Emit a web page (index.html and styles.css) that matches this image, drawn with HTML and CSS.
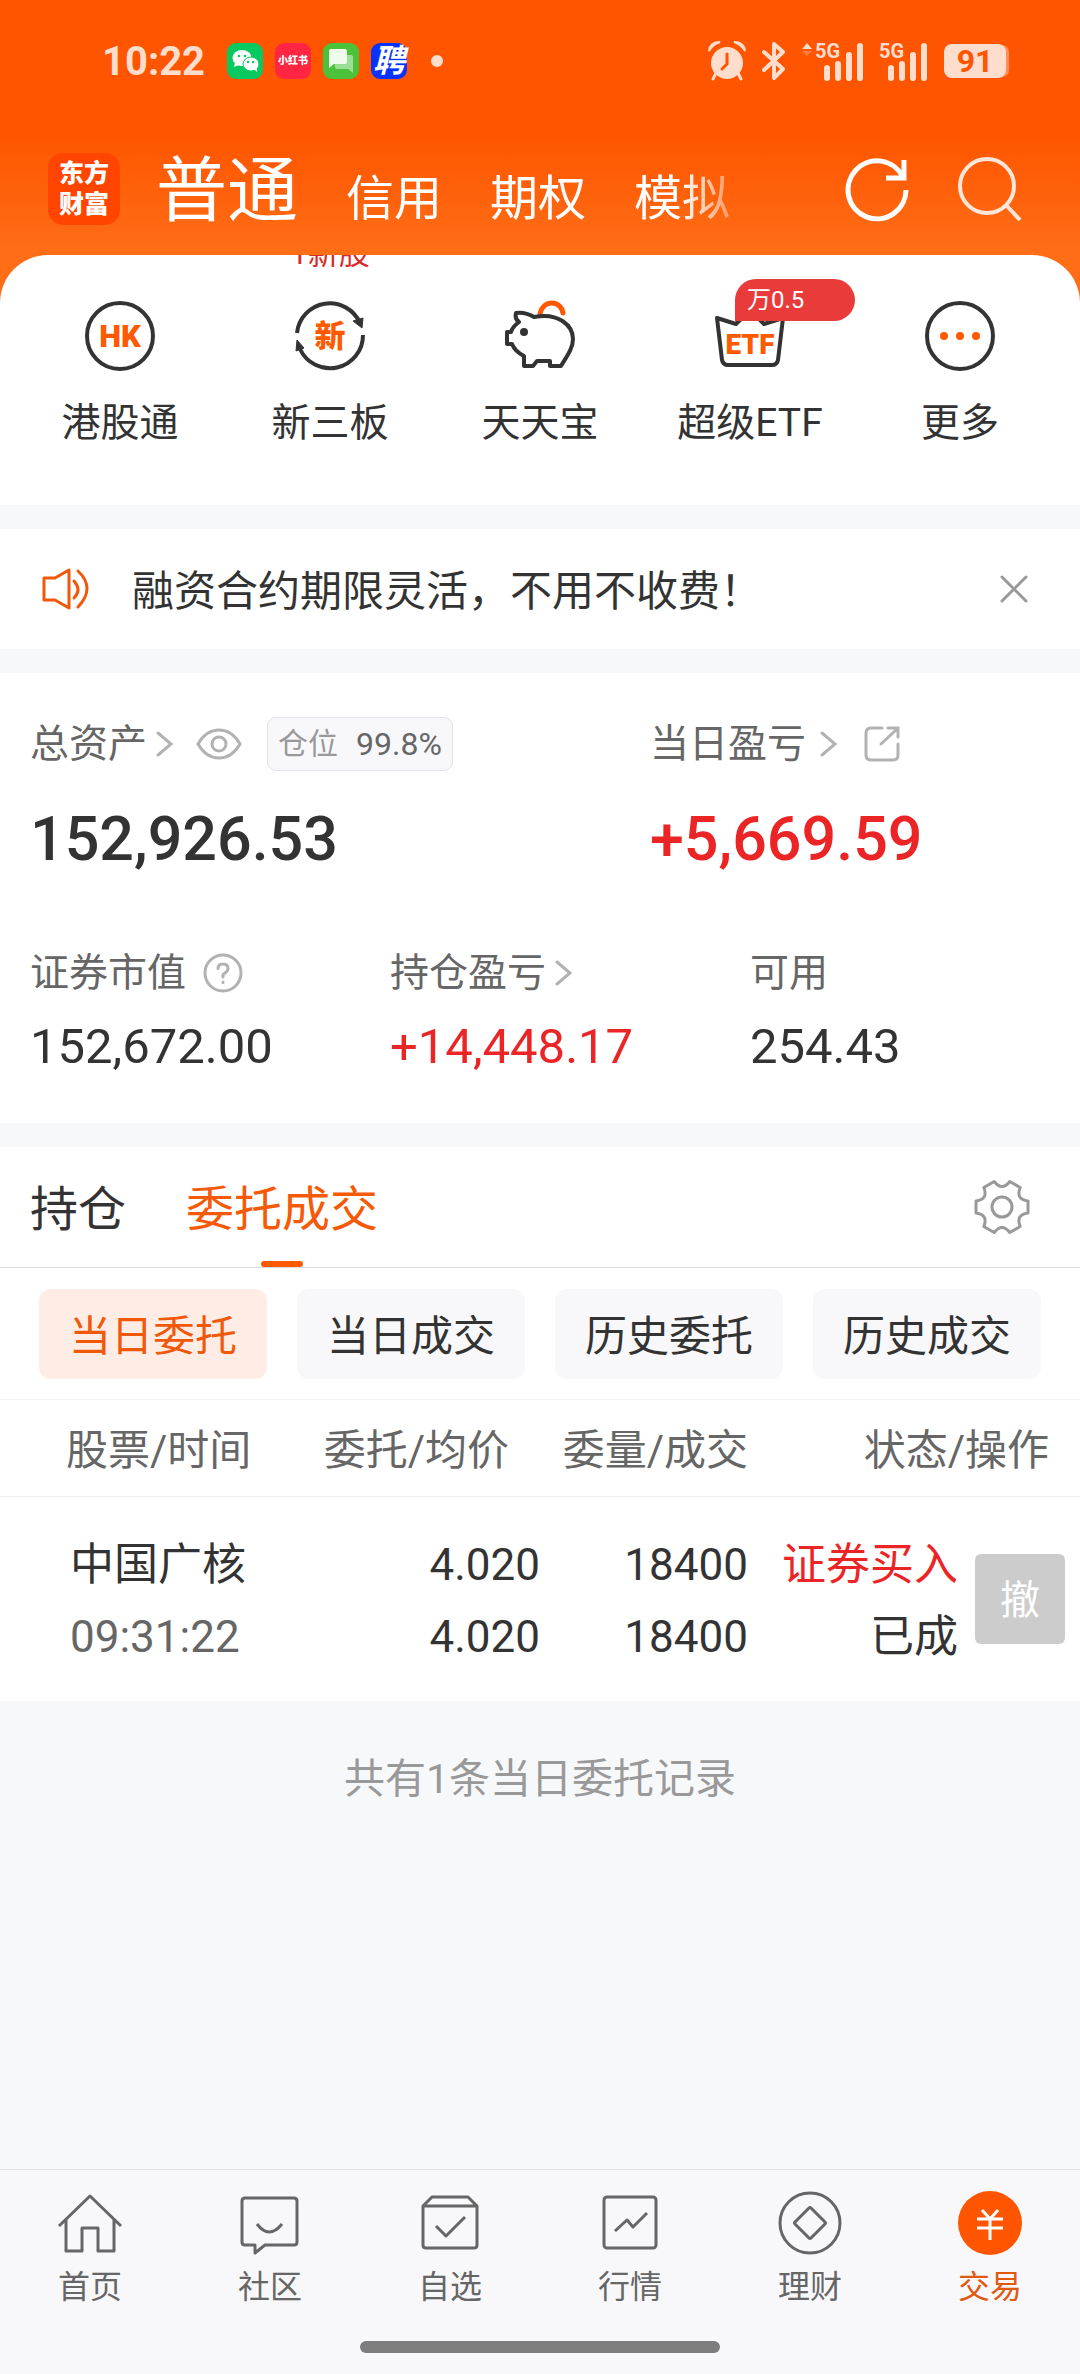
FILE: index.html
```html
<!DOCTYPE html>
<html lang="zh-CN">
<head>
<meta charset="utf-8">
<meta name="viewport" content="width=device-width, initial-scale=1">
<title>交易</title>
<link rel="stylesheet" href="styles.css">
</head>
<body>
<div class="hero">
  <div class="status">
    <span class="clock">10:22</span>
    <span class="notes">
      <svg class="app" viewBox="0 0 36 36" aria-hidden="true"><rect width="36" height="36" rx="9" fill="#07c960"/><ellipse cx="15" cy="15" rx="9.500" ry="8" fill="#fff"/><path d="M8 20l-1 4 5-2z" fill="#fff"/><ellipse cx="24" cy="21" rx="8" ry="7" fill="#fff" stroke="#07c960"/><path d="M27 26l3 3v-4z" fill="#fff"/><g fill="#07c960"><circle cx="12" cy="13" r="1.300"/><circle cx="18" cy="13" r="1.300"/><circle cx="21" cy="19" r="1.200"/><circle cx="26" cy="19" r="1.200"/></g></svg>
      <span class="app app-red">小红书</span>
      <svg class="app" viewBox="0 0 36 36" aria-hidden="true"><rect width="36" height="36" rx="9" fill="#4cc13a"/><path d="M14 12h14q2 0 2 2v16l-5-4H14q-2 0-2-2V14q0-2 2-2z" fill="#9adf93"/><path d="M8 6h14q2 0 2 2v11q0 2-2 2H11l-5 4V8q0-2 2-2z" fill="#eefbed"/></svg>
      <span class="app app-blue">聘</span>
      <span class="dot"></span>
    </span>
    <span class="system">
      <svg class="alarm" viewBox="0 0 38 40" aria-hidden="true"><circle cx="19" cy="22" r="16" fill="#fdc"/><path d="M8 32l-3 6M30 32l3 6" stroke="#fdc" stroke-width="3" stroke-linecap="round"/><path d="M1 10Q2 1 12 1q-8 3-11 9zM37 10Q36 1 26 1q8 3 11 9z" fill="#fdc" stroke="#fdc" stroke-width="2"/><path d="M19 13v10l-5 5" fill="none" stroke="#f50" stroke-width="3" stroke-linecap="round"/></svg>
      <svg class="bt" viewBox="0 0 24 40" aria-hidden="true"><path d="M2 11l19 17-9 9V3l9 8L2 29" fill="none" stroke="#fdc" stroke-width="4" stroke-linejoin="round" stroke-linecap="round"/></svg>
      <svg class="signal" viewBox="0 0 62 40" aria-hidden="true"><path d="M0 8l5-6 5 6z" fill="#fdc"/><path d="M0 10h10l-5 5z" fill="#ff8040"/><text x="13" y="17" class="gen">5G</text><path d="M25 27v10M36 23v14M47 14v23M58 5v32" stroke="#fdc" stroke-width="6" stroke-linecap="round"/></svg>
      <svg class="signal signal-b" viewBox="12 0 50 40" aria-hidden="true"><text x="13" y="17" class="gen">5G</text><path d="M25 27v10M36 23v14M47 14v23M58 5v32" stroke="#fdc" stroke-width="6" stroke-linecap="round"/></svg>
      <span class="battery">91</span>
    </span>
  </div>
  <header class="topbar">
    <a class="logo" href="#">东方<br>财富</a>
    <nav class="modes">
      <a class="mode mode-on" href="#">普通</a>
      <a class="mode" href="#">信用</a>
      <a class="mode" href="#">期权</a>
      <a class="mode" href="#">模拟</a>
    </nav>
    <button class="icon-btn" type="button" aria-label="刷新"><svg width="64" height="64" viewBox="0 0 64 64" fill="none" stroke="#fff" stroke-width="5"><path d="M61 33A29 29 0 1 1 58 20"/><path d="M59 3v18H41"/></svg></button>
    <button class="icon-btn" type="button" aria-label="搜索"><svg width="64" height="64" viewBox="0 0 64 64" fill="none" stroke="#ffe6d9" stroke-width="4"><circle cx="30" cy="29" r="27"/><path d="M49 48l14 15"/></svg></button>
  </header>
</div>

<main class="main">
  <section class="quick">
    <a class="quick-item" href="#">
      <svg class="quick-icon" viewBox="0 0 72 72" aria-hidden="true"><circle cx="36" cy="36" r="33" class="ink"/><text x="36" y="47" class="glyph">HK</text></svg>
      <span>港股通</span>
    </a>
    <a class="quick-item" href="#">
      <span class="hint">1新股</span>
      <svg class="quick-icon" viewBox="0 0 72 72" aria-hidden="true"><path d="M3 33A33 33 0 0 1 66 23M69 35A33 33 0 0 1 6 49" class="ink"/><path d="M59 21l10-3-1 10zM3 40l7 8-8 3z" fill="#333" stroke="#333"/><text x="36" y="47" class="glyph">新</text></svg>
      <span>新三板</span>
    </a>
    <a class="quick-item" href="#">
      <svg class="quick-icon" viewBox="0 0 72 72" aria-hidden="true"><path d="M36 14C39-1 57 0 59 13" fill="none" stroke="#ff5a00" stroke-width="5" stroke-linecap="round"/><path d="M30 17C55 12 69 26 69 39C69 48 63 56 57 66H46V61H33L29 66H20V56C14 53 10 49 8 44H3V32H7C8 28 11 25 15 22C12 20 11 17 12 13C18 12 25 14 30 17Z" class="ink"/><circle cx="20" cy="32" r="4" fill="#333"/></svg>
      <span>天天宝</span>
    </a>
    <a class="quick-item" href="#">
      <svg class="quick-icon" viewBox="0 0 72 72" aria-hidden="true"><path d="M3 18L22 24L36 10L50 24L69 18L64 60Q63 65 58 65H14Q9 65 8 60Z" class="ink"/><text x="36" y="54" class="glyph glyph-s">ETF</text></svg>
      <span class="rate">万0.5</span>
      <span>超级ETF</span>
    </a>
    <a class="quick-item" href="#">
      <svg class="quick-icon" viewBox="0 0 72 72" aria-hidden="true"><circle cx="36" cy="36" r="33" class="ink"/><g fill="#ff5a00"><circle cx="20" cy="36" r="4"/><circle cx="36" cy="36" r="4"/><circle cx="52" cy="36" r="4"/></g></svg>
      <span>更多</span>
    </a>
  </section>

  <section class="notice">
    <svg class="horn" viewBox="0 0 48 42" fill="none" stroke="#f0590a" stroke-width="3" stroke-linecap="round" stroke-linejoin="round" aria-hidden="true"><path d="M2 10h11L27 2v38L13 32H2z"/><path d="M32 13q8 9 0 17M36 3q18 17 0 36"/></svg>
    <p class="notice-text">融资合约期限灵活，不用不收费！</p>
    <button class="icon-btn" type="button" aria-label="关闭"><svg width="30" height="30" viewBox="0 0 30 30" stroke="#999" stroke-width="3" stroke-linecap="round"><path d="M3 3l24 24M27 3L3 27"/></svg></button>
  </section>

  <section class="assets">
    <div class="totals">
      <div>
        <div class="label label-tall">总资产
          <svg class="chev" viewBox="0 0 18 28"><path d="M2 3l13 11L2 25"/></svg>
          <button class="icon-btn eye" type="button" aria-label="隐藏金额"><svg width="46" height="34" viewBox="0 0 46 34" fill="none" stroke="#b2b2b2" stroke-width="3"><path d="M2 17Q10 3 23 3T44 17Q36 31 23 31T2 17Z"/><circle cx="23" cy="17" r="7"/></svg></button>
          <span class="ratio">仓位<b>99.8%</b></span>
        </div>
        <div class="big">152,926.53</div>
      </div>
      <div>
        <div class="label label-tall">当日盈亏
          <svg class="chev chev-far" viewBox="0 0 18 28"><path d="M2 3l13 11L2 25"/></svg>
          <button class="icon-btn share" type="button" aria-label="分享"><svg width="36" height="36" viewBox="0 0 36 36" fill="none" stroke="#b2b2b2" stroke-width="3" stroke-linecap="round"><path d="M18 2H7Q2 2 2 7V29Q2 34 7 34H29Q34 34 34 29V18M24 2H34V11M33 3L17 18"/></svg></button>
        </div>
        <div class="big up">+5,669.59</div>
      </div>
    </div>
    <div class="details">
      <div>
        <div class="label">证券市值<button class="icon-btn help" type="button" aria-label="说明"><svg width="40" height="40" viewBox="0 0 40 40" fill="none" stroke="#b2b2b2" stroke-width="3" stroke-linecap="round"><circle cx="20" cy="20" r="18"/><path d="M15 15.500Q15 11 20 11T25 15.500Q25 18 22 20T20 24"/><path d="M20 29v.5"/></svg></button></div>
        <div class="mid">152,672.00</div>
      </div>
      <div>
        <div class="label">持仓盈亏<svg class="chev" viewBox="0 0 18 28"><path d="M2 3l13 11L2 25"/></svg></div>
        <div class="mid up">+14,448.17</div>
      </div>
      <div>
        <div class="label">可用</div>
        <div class="mid">254.43</div>
      </div>
    </div>
  </section>

  <section class="orders">
    <div class="tabs">
      <button class="tab" type="button">持仓</button>
      <button class="tab tab-on" type="button">委托成交</button>
      <button class="icon-btn gear" type="button" aria-label="设置"><svg width="56" height="56" viewBox="-28 -28 56 56" fill="none" stroke="#999" stroke-width="3" stroke-linejoin="round"><path d="M26-6V6Q13.400 7.700 18.200 19.500L7.800 25.500Q0 15.500-7.800 25.500L-18.200 19.500Q-13.400 7.700-26 6V-6Q-13.400-7.700-18.200-19.500L-7.800-25.500Q0-15.500 7.800-25.500L18.200-19.500Q13.400-7.700 26-6Z"/><circle r="10"/></svg></button>
    </div>
    <div class="chips">
      <button class="chip chip-on" type="button">当日委托</button>
      <button class="chip" type="button">当日成交</button>
      <button class="chip" type="button">历史委托</button>
      <button class="chip" type="button">历史成交</button>
    </div>
    <table class="list">
      <colgroup><col><col class="c-price"><col class="c-qty"><col class="c-state"><col class="c-act"></colgroup>
      <thead>
        <tr><th class="first">股票/时间</th><th class="price">委托/均价</th><th>委量/成交</th><th class="last" colspan="2">状态/操作</th></tr>
      </thead>
      <tbody>
        <tr>
          <td class="first"><div>中国广核</div><div class="time">09:31:22</div></td>
          <td><div>4.020</div><div>4.020</div></td>
          <td><div>18400</div><div>18400</div></td>
          <td><div class="up">证券买入</div><div>已成</div></td>
          <td class="act"><button class="cancel" type="button">撤</button></td>
        </tr>
      </tbody>
    </table>
  </section>
  <p class="summary">共有1条当日委托记录</p>
</main>

<footer class="dock">
  <nav class="dock-nav">
    <a class="dock-item" href="#"><svg class="dock-icon" viewBox="0 0 66 66"><path d="M2 36L33 6L64 36M9 30V61H25V38H41V61H57V30"/></svg>首页</a>
    <a class="dock-item" href="#"><svg class="dock-icon" viewBox="0 0 66 66"><path d="M8 8H57Q60 8 60 11V52Q60 55 57 55H28L18 63V55H8Q5 55 5 52V11Q5 8 8 8ZM20 34Q32 50 45 34"/></svg>社区</a>
    <a class="dock-item" href="#"><svg class="dock-icon" viewBox="0 0 66 66"><path d="M6 16L15 7H51L60 16V55Q60 58 57 58H9Q6 58 6 55ZM6 16H60M19 36L29 46L48 27"/></svg>自选</a>
    <a class="dock-item" href="#"><svg class="dock-icon" viewBox="0 0 66 66"><rect x="7" y="7" width="52" height="51" rx="3"/><path d="M18 41L30 30L36 37L50 23"/></svg>行情</a>
    <a class="dock-item" href="#"><svg class="dock-icon" viewBox="0 0 66 66"><circle cx="33" cy="33" r="30"/><path d="M32 18Q33 17 34 18L48 32Q49 33 48 34L34 48Q33 49 32 48L18 34Q17 33 18 32Z"/></svg>理财</a>
    <a class="dock-item dock-on" href="#"><svg class="dock-icon" viewBox="0 0 66 66"><circle cx="33" cy="33" r="32" class="disc"/><path d="M25 20L33 29L41 20M33 29V50M20 29H46M20 38H46" class="yen"/></svg>交易</a>
  </nav>
  <div class="home-bar"></div>
</footer>
</body>
</html>
```

FILE: styles.css
```css
* { box-sizing: border-box; }

body {
  margin: 0;
  min-height: 100vh;
  display: flex;
  flex-direction: column;
  background: #f7f8fa;
  color: #333;
  font-family: Roboto, "Noto Sans CJK SC", sans-serif;
  font-size: 42px;
}

a { color: inherit; text-decoration: none; }
p { margin: 0; }
button {
  margin: 0;
  padding: 0;
  border: 0;
  background: none;
  color: inherit;
  font: inherit;
}
svg { display: block; flex: none; overflow: visible; }
.icon-btn { display: block; flex: none; }
.up { color: #eb2525; }

/* Orange header */
.hero {
  padding-bottom: 50px;
  background: linear-gradient(#ff5500 135px, #ff6e17 255px);
}

.status {
  display: flex;
  align-items: center;
  height: 122px;
  padding: 0 74px 0 102px;
  color: #ffddcc;
}
.clock { width: 125px; font-size: 40px; font-weight: 700; }
.notes { display: flex; align-items: center; gap: 12px; }
.app {
  width: 36px;
  height: 36px;
  border-radius: 9px;
  color: #fff;
  line-height: 36px;
  text-align: center;
}
.app-red { background: #ff2543; font-size: 10px; font-weight: 900; }
.app-blue { background: #0a32ff; font-size: 32px; font-weight: 700; font-style: italic; }
.dot { width: 12px; height: 12px; margin-left: 12px; border-radius: 50%; background: #ffddcc; }
.system { display: flex; align-items: center; margin-left: auto; }
.alarm { width: 38px; height: 40px; margin-right: 16px; }
.bt { width: 24px; height: 40px; margin-right: 16px; }
.signal { width: 62px; height: 40px; margin-right: 14px; }
.signal-b { width: 50px; margin-right: 16px; }
.gen { fill: #ffddcc; font-size: 20px; font-weight: 700; }
.battery {
  width: 62px;
  height: 34px;
  border-radius: 8px;
  background: #ffddcc;
  box-shadow: 4px 0 0 -1px #ff8f59;
  color: #ff5500;
  font-size: 32px;
  font-weight: 700;
  line-height: 35px;
  text-align: center;
}

.topbar {
  display: flex;
  align-items: center;
  height: 133px;
  padding: 0 59px 0 48px;
  color: #fff;
}
.logo {
  display: flex;
  align-items: center;
  justify-content: center;
  width: 72px;
  height: 72px;
  margin-right: 36px;
  border-radius: 15px;
  background: #ff4500;
  font-size: 25px;
  font-weight: 900;
  line-height: 31px;
}
.modes {
  display: flex;
  flex: 1;
  align-items: baseline;
  gap: 48px;
  min-width: 0;
  padding-top: 12px;
  overflow: hidden;
  white-space: nowrap;
  -webkit-mask-image: linear-gradient(to right, #000 calc(100% - 140px), transparent calc(100% - 65px));
  mask-image: linear-gradient(to right, #000 calc(100% - 140px), transparent calc(100% - 65px));
}
.mode { font-size: 48px; line-height: 96px; }
.mode-on { font-size: 71px; }
.topbar .icon-btn { margin-left: 48px; }
.topbar .icon-btn:first-of-type { margin-left: 24px; }

.main {
  display: flex;
  flex-direction: column;
  gap: 24px;
  margin-top: -50px;
}
.main > section { background: #fff; }

/* Shortcuts */
.main > .quick {
  display: grid;
  grid-template-columns: repeat(5, 1fr);
  padding: 45px 15px 58px;
  border-radius: 48px 48px 0 0;
  overflow: hidden;
}
.quick-item {
  position: relative;
  display: flex;
  flex-direction: column;
  align-items: center;
  gap: 27px;
  font-size: 39px;
  line-height: 48px;
}
.quick-icon { width: 72px; height: 72px; }
.ink {
  fill: none;
  stroke: #333;
  stroke-width: 4;
  stroke-linejoin: round;
}
.glyph {
  fill: #ff5a00;
  font-size: 31px;
  font-weight: 900;
  text-anchor: middle;
}
.glyph-s { font-size: 28px; }
.hint {
  position: absolute;
  top: -64px;
  color: #d92b2b;
  font-size: 31px;
  line-height: 36px;
}
.rate {
  position: absolute;
  top: -21px;
  left: 90px;
  width: 120px;
  padding-left: 12px;
  border-radius: 21px 21px 21px 0;
  background: #ea3b3b;
  color: #fff;
  font-size: 24px;
  line-height: 42px;
}

/* Notice strip */
.notice {
  display: flex;
  align-items: center;
  height: 120px;
  padding: 0 51px 0 42px;
}
.horn { width: 48px; height: 42px; margin-right: 42px; }
.notice-text { flex: 1; padding-top: 6px; line-height: 60px; }

/* Asset figures */
.assets { padding: 44px 30px 48px; }
.totals { display: grid; grid-template-columns: 62fr 40fr; }
.details {
  display: grid;
  grid-template-columns: 360fr 360fr 300fr;
  margin-top: 74px;
}
.label {
  display: flex;
  align-items: center;
  height: 48px;
  color: #666;
  font-size: 39px;
  line-height: 48px;
  white-space: nowrap;
}
.label-tall { height: 54px; }
.chev {
  width: 18px;
  height: 28px;
  margin-left: 9px;
  fill: none;
  stroke: #b2b2b2;
  stroke-width: 3;
  stroke-linecap: round;
}
.chev-far { margin-left: 14px; }
.eye { margin-left: 22px; }
.share { margin-left: 26px; }
.help { margin-left: 17px; }
.ratio {
  display: flex;
  align-items: center;
  gap: 18px;
  height: 54px;
  margin-left: 25px;
  padding: 0 10px;
  border: 1px solid #e4e4e8;
  border-radius: 9px;
  background: #f8f8fb;
  color: #999;
  font-size: 30px;
}
.ratio b { color: #666; font-size: 32px; font-weight: 400; }
.big {
  margin-top: 32px;
  font-size: 61px;
  font-weight: 500;
  line-height: 72px;
}
.mid { margin-top: 22px; font-size: 49px; line-height: 56px; }

/* Orders */
.tabs {
  display: flex;
  align-items: center;
  gap: 60px;
  height: 121px;
  padding: 0 50px 0 30px;
  border-bottom: 1px solid #ddd;
}
.tab {
  position: relative;
  height: 120px;
  padding-top: 6px;
  font-size: 48px;
  line-height: 114px;
}
.tab-on { color: #f55a08; }
.tab-on::after {
  content: "";
  position: absolute;
  bottom: 0;
  left: calc(50% - 21px);
  width: 42px;
  height: 6px;
  border-radius: 3px;
  background: #ff5a00;
}
.gear { margin-left: auto; }
.chips {
  display: grid;
  grid-template-columns: repeat(4, 1fr);
  gap: 30px;
  padding: 21px 39px 20px;
  border-bottom: 1px solid #f3f3f5;
}
.chip {
  height: 90px;
  padding-top: 6px;
  border-radius: 12px;
  background: #f8f8fa;
  line-height: 84px;
}
.chip-on { background: #ffede5; color: #f0590a; }

.list {
  width: 100%;
  table-layout: fixed;
  border-collapse: collapse;
  text-align: right;
  white-space: nowrap;
}
.c-price { width: 240px; }
.c-qty { width: 208px; }
.c-state { width: 210px; }
.c-act { width: 122px; }
.list th {
  padding: 6px 0 0;
  border-bottom: 1px solid #eee;
  color: #666;
  font-weight: 400;
  line-height: 90px;
}
.list td { padding: 32px 0 28px; font-size: 44px; line-height: 72px; }
.list th.first { padding-left: 66px; text-align: left; }
.list td.first { padding-left: 70px; text-align: left; }
.list th.price { padding-right: 31px; }
.list th.last { padding-right: 31px; }
.list td.act { padding: 30px 15px 30px 17px; }
.time { color: #666; }
.cancel {
  display: block;
  width: 90px;
  height: 90px;
  padding-top: 4px;
  border-radius: 6px;
  background: #ccc;
  color: #fff;
  font-size: 40px;
  line-height: 86px;
}
.summary {
  margin-top: 24px;
  color: #999;
  font-size: 41px;
  line-height: 60px;
  text-align: center;
}

/* Bottom navigation */
.dock {
  margin-top: auto;
  padding: 20px 0 21px;
  border-top: 1px solid #e2e4e8;
  background: #f8f8fb;
}
.dock-nav { display: grid; grid-template-columns: repeat(6, 1fr); }
.dock-item {
  display: flex;
  flex-direction: column;
  align-items: center;
  gap: 11px;
  color: #666;
  font-size: 32px;
  line-height: 40px;
}
.dock-on { color: #e0590f; }
.dock-icon {
  width: 66px;
  height: 66px;
  fill: none;
  stroke: #666;
  stroke-width: 3;
  stroke-linejoin: round;
}
.dock-icon .disc { fill: #ff5500; stroke: none; }
.dock-icon .yen { stroke: #fff; }
.home-bar {
  width: 360px;
  height: 12px;
  margin: 34px auto 0;
  border-radius: 6px;
  background: #7d7d7d;
}
```
